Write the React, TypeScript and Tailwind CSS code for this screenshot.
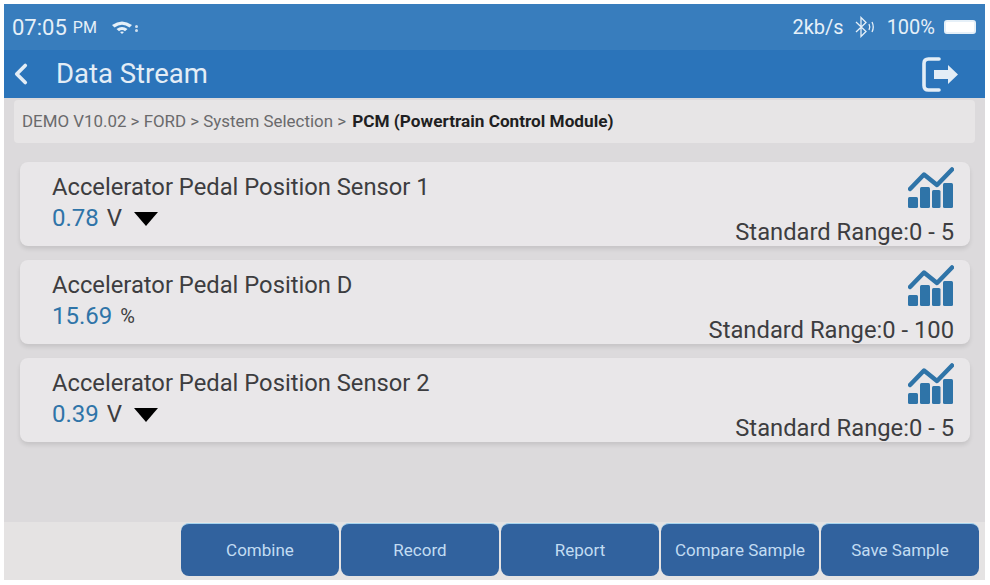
import React from 'react';
import { ChevronLeft } from 'lucide-react';

type Row = { name: string; value: string; unit: string; arrow: boolean; range: string };

const rows: Row[] = [
  { name: 'Accelerator Pedal Position Sensor 1', value: '0.78', unit: 'V', arrow: true, range: 'Standard Range:0 - 5' },
  { name: 'Accelerator Pedal Position D', value: '15.69', unit: '%', arrow: false, range: 'Standard Range:0 - 100' },
  { name: 'Accelerator Pedal Position Sensor 2', value: '0.39', unit: 'V', arrow: true, range: 'Standard Range:0 - 5' },
];

const buttons = ['Combine', 'Record', 'Report', 'Compare Sample', 'Save Sample'];

const ChartIcon: React.FC = () => (
  <svg className="shrink-0" width="46" height="41" viewBox="0 0 46 41" fill="#2f74a8">
    <path d="M2 22 L16 7.5 L29 18 L44 2.5" fill="none" stroke="#2f74a8" strokeWidth="4.5" strokeLinejoin="round" strokeLinecap="round" />
    <rect x="0" y="30" width="10" height="11" rx="1.5" />
    <rect x="12" y="20" width="10" height="21" rx="1.5" />
    <rect x="24" y="23" width="8.5" height="18" rx="1.5" />
    <rect x="35" y="16" width="10" height="25" rx="1.5" />
  </svg>
);

const ExitIcon: React.FC = () => (
  <svg width="36" height="35" viewBox="0 0 36 35" fill="none">
    <path d="M17 2 H6.5 Q2 2 2 6.5 V28.5 Q2 33 6.5 33 H17" stroke="#e3edf6" strokeWidth="3.6" strokeLinecap="round" />
    <path d="M12 13 H26 V8 L36 17.5 L26 27 V22 H12 Z" fill="#e3edf6" />
  </svg>
);

const App: React.FC = () => {
  return (
    <div className="w-[990px] h-[585px] bg-white pt-1 pl-1 pr-[5px] pb-[5px] overflow-hidden font-['Roboto',sans-serif]">
      <div className="h-full flex flex-col bg-[#dcdadc]">
        <div className="h-[46px] shrink-0 bg-[#387dbd] flex items-center justify-between pl-2 pr-[9px] text-[#e6f0f8]">
          <div className="flex items-center">
            <span className="text-[22px]">07:05</span>
            <span className="text-[16px] ml-1.5 mt-0.5">PM</span>
            <svg className="ml-[15px]" width="20" height="13" viewBox="0 0 20 13" fill="#e6f0f8">
              <path d="M0 4 Q10 -3 20 4 L17.5 6.5 Q10 1 2.5 6.5 Z" />
              <path d="M4.5 8 Q10 4 15.5 8 L13 10.2 Q10 8 7 10.2 Z" />
              <path d="M8 11 Q10 9.8 12 11 L10 13 Z" />
            </svg>
            <span className="ml-[3px] mt-0.5 flex flex-col gap-px">
              <span className="w-[3px] h-[3px] rounded-full bg-[#cfe0ef]" />
              <span className="w-[3px] h-[3px] rounded-full bg-[#cfe0ef]" />
            </span>
          </div>
          <div className="flex items-center">
            <span className="text-[20px]">2kb/s</span>
            <svg className="ml-[11px]" width="20" height="22" viewBox="0 0 20 22" fill="none" stroke="#e6f0f8" strokeWidth="1.3">
              <path d="M1 6 L11 15.5 L6 20.5 V1.5 L11 6.5 L1 16" />
              <path d="M14 8 Q15.5 11 14 14" />
              <path d="M17 6 Q19.5 11 17 16" />
            </svg>
            <span className="text-[20px] ml-[12px]">100%</span>
            <div className="ml-[9px] w-[32px] h-[14px] rounded-[3px] border-2 border-[#e6f0f8] bg-white" />
          </div>
        </div>

        <div className="h-[48px] shrink-0 bg-[#2b74ba] flex items-center justify-between pr-[27px] text-[#e3edf6]">
          <div className="flex items-center">
            <ChevronLeft size={34} strokeWidth={2.6} color="#e3edf6" />
            <span className="text-[27.5px] ml-[18px]">Data Stream</span>
          </div>
          <ExitIcon />
        </div>

        <div className="mt-0.5 ml-2.5 mr-2.5 h-[43px] shrink-0 bg-[#e7e5e6] rounded-sm flex items-center px-2 text-[16.9px] text-[#6a6a6c]">
          <span>DEMO V10.02 &gt; FORD &gt; System Selection &gt;&nbsp;</span>
          <span className="font-bold ml-0.5 text-[17.2px] text-[#1f1f22]">PCM (Powertrain Control Module)</span>
        </div>

        <div className="flex-1 flex flex-col gap-[14px] pt-[19px] pl-4 pr-[15px]">
          {rows.map((row) => (
            <div key={row.name} className="h-[84px] bg-[#e9e7e9] rounded-lg shadow-[0_3px_4px_rgba(0,0,0,0.1)] flex justify-between pl-8 pr-4">
              <div className="pt-[10px]">
                <div className="text-[23.75px] leading-[30px] text-[#3d3d40]">{row.name}</div>
                <div className="flex items-center text-[24px] leading-[30px] mt-px">
                  <span className="text-[#2f74a8]">{row.value}</span>
                  <span className={row.arrow ? 'ml-2 text-[#3d3d40]' : 'ml-2 text-[20px] text-[#3d3d40]'}>{row.unit}</span>
                  {row.arrow && (
                    <div className="ml-3 mt-0.5 w-0 h-0 border-l-[12px] border-r-[12px] border-t-[14px] border-l-transparent border-r-transparent border-t-black" />
                  )}
                </div>
              </div>
              <div className="flex flex-col items-end pt-[5px]">
                <ChartIcon />
                <div className="text-[23.75px] leading-[28px] text-[#3d3d40] mt-[10px]">{row.range}</div>
              </div>
            </div>
          ))}
        </div>

        <div className="h-[58px] shrink-0 bg-[#e5e3e3] flex justify-end items-start gap-0.5 pt-px pr-[6px]">
          {buttons.map((label) => (
            <button key={label} className="w-[158px] h-[53px] pt-0.5 rounded-lg bg-[#31629e] border-t border-[#a5d3ee] text-[17px] text-[#c2dcf2]">
              {label}
            </button>
          ))}
        </div>
      </div>
    </div>
  );
};

export default App;
